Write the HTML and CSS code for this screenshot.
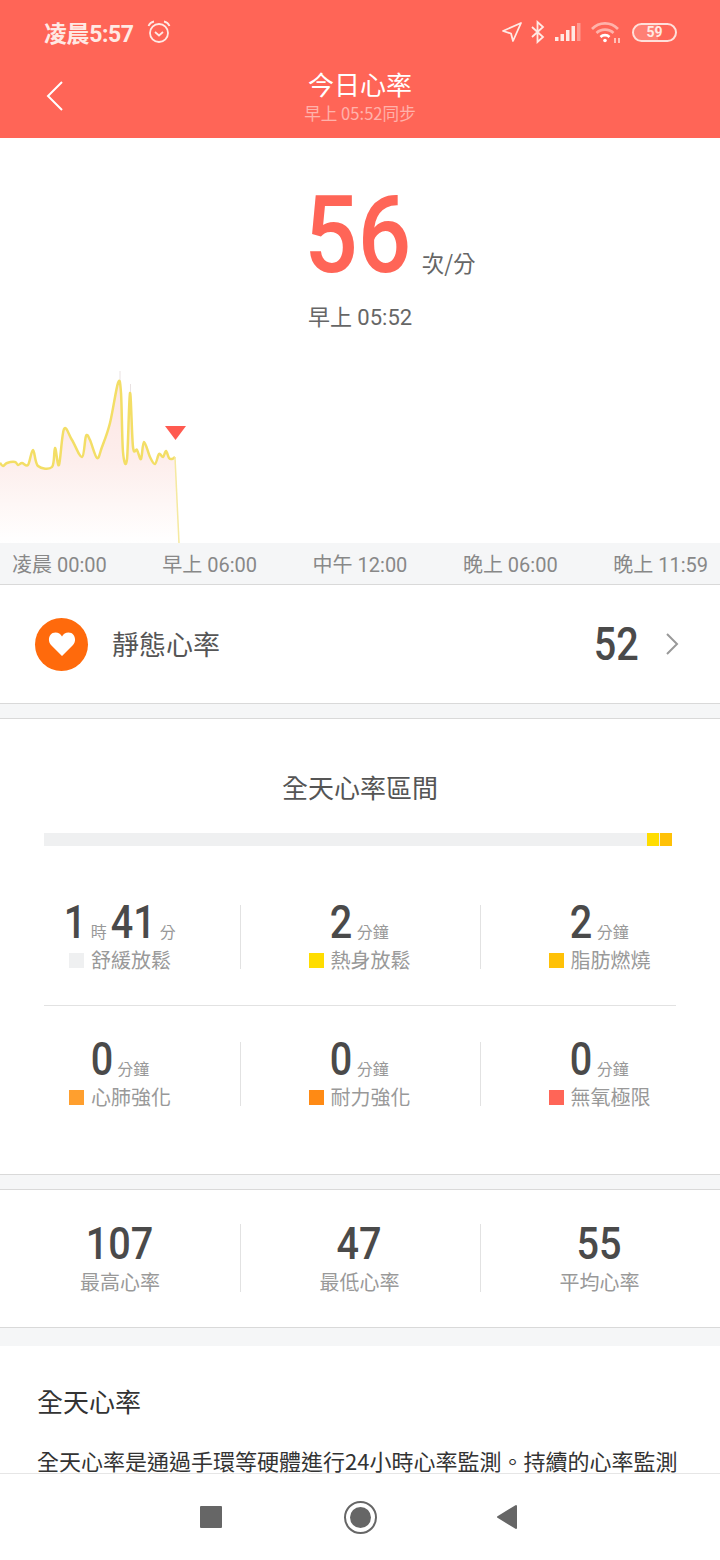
FILE: index.html
```html
<!DOCTYPE html>
<html lang="zh-Hant">
<head>
  <meta charset="UTF-8" />
  <meta name="viewport" content="width=device-width, initial-scale=1.0" />
  <title>今日心率</title>
  <link rel="stylesheet" href="styles.css">
</head>
<body>
  <div class="phone">
    <div class="top">
      <div class="status-bar">
        <div class="status-left">
          <span class="clock">凌晨5:57</span>
          <svg class="alarm" width="24" height="26" viewBox="0 0 24 26" fill="none" stroke="#ffe9e4" stroke-width="1.8">
            <circle cx="12" cy="14" r="9"/>
            <path d="M8 13l4 3.500 4-3.500"/>
            <path d="M1.500 7c1-2.500 3-4 5.500-4.500M22.500 7c-1-2.500-3-4-5.500-4.500"/>
          </svg>
        </div>
        <div class="status-right">
          <svg width="20" height="22" viewBox="0 0 20 22" fill="none" stroke="#ffe9e4" stroke-width="1.8" stroke-linejoin="round">
            <path d="M19 2L1 10l8 2.500L11 20z"/>
          </svg>
          <svg width="16" height="24" viewBox="0 0 16 24" fill="none" stroke="#ffe9e4" stroke-width="1.8">
            <path d="M2 7l11 10-5.500 5V2L13 7 2 17"/>
          </svg>
          <svg width="28" height="20" viewBox="0 0 28 20" fill="#ffe9e4">
            <rect x="1" y="15" width="3.500" height="4"/>
            <rect x="6.500" y="12" width="3.500" height="7"/>
            <rect x="12" y="8" width="3.500" height="11"/>
            <rect x="17.500" y="4" width="3.500" height="15"/>
            <rect x="23" y="1" width="3.500" height="18" opacity="0.4"/>
          </svg>
          <svg width="32" height="24" viewBox="0 0 32 24" fill="none" stroke="#ffb3aa" stroke-width="2.600">
            <path d="M2 9c7-7.500 19-7.500 26 0"/>
            <path d="M6.500 13c4.500-4.500 12.500-4.500 17 0" stroke="#ffb3aa"/>
            <path d="M10.500 17c2.500-2.500 6.500-2.500 9 0" stroke="#fff"/>
            <circle cx="15" cy="20.500" r="1.800" fill="#fff" stroke="none"/>
            <path d="M25 18v5M29 18v5" stroke="#ffe0da" stroke-width="1.500"/>
          </svg>
          <div class="battery"><span class="battery-level"></span><span class="battery-num">59</span></div>
        </div>
      </div>
      <div class="nav">
        <svg class="back" width="18" height="30" viewBox="0 0 18 30" fill="none" stroke="#fff" stroke-width="2">
          <path d="M16 1L2 15l14 14"/>
        </svg>
        <div class="nav-title">今日心率</div>
        <div class="nav-sub">早上 05:52同步</div>
      </div>
    </div>

    <div class="summary">
      <div class="rate"><b class="num rate-num">56</b><span class="rate-unit">次/分</span></div>
      <div class="rate-time">早上 05:52</div>
      <svg class="chart" width="720" height="205" viewBox="0 338 720 205">
        <defs>
          <linearGradient id="fade" x1="0" y1="0" x2="0" y2="1">
            <stop offset="0" stop-color="#fde6e4"/>
            <stop offset="0.5" stop-color="#fdeeec"/>
            <stop offset="1" stop-color="#ffffff"/>
          </linearGradient>
        </defs>
        <path id="chart-fill" fill="url(#fade)"/>
        <path fill="none" stroke="#e9e2e2" stroke-width="1" d="M120 371V384M130.500 384V394"/>
        <path id="chart-line" fill="none" stroke="#f3de66" stroke-width="2.5" stroke-linejoin="round"/>
        <path fill="none" stroke="#f5e9a0" stroke-width="1.500" d="M175 457L179 543"/>
        <path fill="#ff5a50" d="M165 426h21l-10.500 14z"/>
      </svg>
    </div>
    <div class="axis">
      <span>凌晨 00:00</span>
      <span>早上 06:00</span>
      <span>中午 12:00</span>
      <span>晚上 06:00</span>
      <span>晚上 11:59</span>
    </div>

    <div class="resting">
      <div class="heart-badge">
        <svg width="28" height="26" viewBox="0 0 28 26" fill="#fff">
          <path d="M14 25L3 14C-1 9.500 1 1.500 7.500 1.500c3 0 5 1.500 6.500 4 1.500-2.500 3.500-4 6.500-4C27 1.500 29 9.500 25 14z"/>
        </svg>
      </div>
      <div class="resting-label">靜態心率</div>
      <b class="num resting-num">52</b>
      <svg class="chevron" width="14" height="22" viewBox="0 0 14 22" fill="none" stroke="#999" stroke-width="2">
        <path d="M2 1l10 10L2 21"/>
      </svg>
    </div>

    <div class="gap"></div>

    <div class="zones">
      <div class="zones-title">全天心率區間</div>
      <div class="zones-bar"><span class="seg seg-warm"></span><span class="seg seg-burn"></span></div>
      <div class="zones-grid">
        <div class="zone">
          <div class="zone-value"><b class="num one">1</b><small>時</small><b class="num">41</b><small>分</small></div>
          <div class="zone-name"><i class="dot c-relax"></i>舒緩放鬆</div>
        </div>
        <div class="zone">
          <div class="zone-value"><b class="num one">2</b><small>分鐘</small></div>
          <div class="zone-name"><i class="dot c-warm"></i>熱身放鬆</div>
        </div>
        <div class="zone">
          <div class="zone-value"><b class="num one">2</b><small>分鐘</small></div>
          <div class="zone-name"><i class="dot c-burn"></i>脂肪燃燒</div>
        </div>
      </div>
      <div class="zones-rule"></div>
      <div class="zones-grid">
        <div class="zone">
          <div class="zone-value"><b class="num one">0</b><small>分鐘</small></div>
          <div class="zone-name"><i class="dot c-cardio"></i>心肺強化</div>
        </div>
        <div class="zone">
          <div class="zone-value"><b class="num one">0</b><small>分鐘</small></div>
          <div class="zone-name"><i class="dot c-endure"></i>耐力強化</div>
        </div>
        <div class="zone">
          <div class="zone-value"><b class="num one">0</b><small>分鐘</small></div>
          <div class="zone-name"><i class="dot c-max"></i>無氧極限</div>
        </div>
      </div>
    </div>

    <div class="gap"></div>

    <div class="stats">
      <div class="stat"><b class="num three">107</b><span>最高心率</span></div>
      <div class="stat"><b class="num">47</b><span>最低心率</span></div>
      <div class="stat"><b class="num">55</b><span>平均心率</span></div>
    </div>

    <div class="gap-plain"></div>

    <div class="about">
      <h3>全天心率</h3>
      <p>全天心率是通過手環等硬體進行24小時心率監測。持續的心率監測</p>
    </div>

    <div class="navbar">
      <span class="nav-square"></span>
      <span class="nav-home"><span></span></span>
      <svg class="nav-back" width="22" height="26" viewBox="0 0 22 26" fill="#666" stroke="#666" stroke-width="2" stroke-linejoin="round">
        <path d="M20 2v22L2 13z"/>
      </svg>
    </div>
  </div>

  <script>
    const points = [
      [0,463],[3,466],[7,463],[15,462],[18,465],[22,463],[28,465],[33,450],[38,466],[52,467],
      [55,448],[59,465],[64,429],[72,440],[82,457],[86,436],[90,440],[97,458],[102,447],[110,423],
      [118,383],[121,393],[123,452],[127,459],[130,393],[133,447],[137,450],[141,459],[144,442],
      [150,457],[155,464],[159,454],[163,457],[166,451],[169,458],[172,459],[175,457]
    ];

    function smoothPath(pts) {
      let d = "M" + pts[0][0] + " " + pts[0][1];
      for (let i = 0; i < pts.length - 1; i++) {
        const p0 = pts[Math.max(i - 1, 0)];
        const p1 = pts[i];
        const p2 = pts[i + 1];
        const p3 = pts[Math.min(i + 2, pts.length - 1)];
        const c1x = p1[0] + (p2[0] - p0[0]) / 6;
        const c1y = p1[1] + (p2[1] - p0[1]) / 6;
        const c2x = p2[0] - (p3[0] - p1[0]) / 6;
        const c2y = p2[1] - (p3[1] - p1[1]) / 6;
        d += "C" + c1x + " " + c1y + " " + c2x + " " + c2y + " " + p2[0] + " " + p2[1];
      }
      return d;
    }

    const line = smoothPath(points);
    document.getElementById("chart-line").setAttribute("d", line);
    document.getElementById("chart-fill").setAttribute("d", line + "L179 543L0 543z");
  </script>
</body>
</html>
```

FILE: styles.css
```css
* {
  box-sizing: border-box;
}

body {
  margin: 0;
  padding: 0;
  background: white;
  font-family: "Noto Sans CJK TC", "Noto Sans", sans-serif;
  color: #333;
}

.phone {
  width: 720px;
  height: 1560px;
  display: flex;
  flex-direction: column;
  overflow: hidden;
}

/* digits in the app are a narrow DIN, squeeze Roboto to get close */
.num {
  display: inline-block;
  font-family: "Roboto", sans-serif;
  font-weight: 500;
  color: #4a4a4a;
  transform: scaleX(0.86);
  margin: 0 -0.08em;
}

.num.one {
  margin: 0 -0.04em;
}

.top {
  height: 138px;
  flex: none;
  background: #ff6557;
  color: white;
}

.status-bar {
  height: 64px;
  padding: 0 43px 0 44px;
  display: flex;
  justify-content: space-between;
  align-items: center;
}

.status-left,
.status-right {
  display: flex;
  align-items: center;
}

.clock {
  font-family: "Roboto", "Noto Sans CJK TC", sans-serif;
  font-size: 23px;
  font-weight: 700;
  color: #ffe9e4;
  letter-spacing: -0.4px;
}

.alarm {
  margin-left: 13px;
}

.status-right {
  gap: 8px;
}

.battery {
  position: relative;
  width: 45px;
  height: 19px;
  margin-left: 2px;
  border: 2px solid #ffe0da;
  border-radius: 10px;
  overflow: hidden;
  text-align: center;
}

.battery-level {
  position: absolute;
  left: 0;
  top: 0;
  bottom: 0;
  width: 59%;
  background: rgba(255, 255, 255, 0.18);
}

.battery-num {
  position: relative;
  display: block;
  font-family: "Roboto", sans-serif;
  font-size: 14px;
  font-weight: 700;
  line-height: 15px;
  color: #ffe9e4;
}

.nav {
  position: relative;
  height: 74px;
  padding-top: 2px;
  text-align: center;
}

.back {
  position: absolute;
  left: 46px;
  top: 17px;
}

.nav-title {
  font-size: 26px;
  line-height: 36px;
}

.nav-sub {
  margin-top: 1px;
  font-size: 16.6px;
  line-height: 20px;
  color: rgba(255, 255, 255, 0.5);
}

.summary {
  position: relative;
  height: 405px;
  flex: none;
  text-align: center;
}

.rate {
  height: 150px;
  padding: 46px 0 0 304px;
  display: flex;
  align-items: baseline;
  white-space: nowrap;
}

.rate-num {
  font-size: 107px;
  line-height: 104px;
  color: #ff6557;
  transform: scaleX(0.88);
  margin: 0 -0.065em;
}

.rate-unit {
  margin-left: 10px;
  font-size: 22.5px;
  color: #666;
}

.rate-time {
  margin-top: 14px;
  font-family: "Roboto", "Noto Sans CJK TC", sans-serif;
  font-size: 22px;
  line-height: 32px;
  color: #666;
}

.chart {
  position: absolute;
  left: 0;
  bottom: 0;
}

.axis {
  height: 42px;
  flex: none;
  padding: 0 12px;
  display: flex;
  justify-content: space-between;
  align-items: center;
  background: #f5f6f7;
  border-bottom: 1px solid #d9d9d9;
  font-family: "Roboto", "Noto Sans CJK TC", sans-serif;
  font-size: 20px;
  color: #888;
}

.resting {
  height: 118px;
  flex: none;
  padding: 0 41px 0 35px;
  display: flex;
  align-items: center;
}

.heart-badge {
  width: 53px;
  height: 53px;
  border-radius: 50%;
  background: #ff6a0c;
  display: flex;
  justify-content: center;
  align-items: center;
}

.resting-label {
  flex: 1;
  margin-left: 24px;
  margin-bottom: 2px;
  font-size: 27px;
  color: #555;
}

.resting-num {
  margin-right: 23px;
  font-size: 46px;
  line-height: 54px;
}

.gap {
  height: 16px;
  flex: none;
  background: #f5f6f7;
  border-top: 1px solid #d9d9d9;
  border-bottom: 1px solid #d9d9d9;
}

.zones {
  height: 455px;
  flex: none;
  padding-top: 49px;
}

.zones-title {
  font-size: 26px;
  line-height: 38px;
  text-align: center;
  color: #555;
}

.zones-bar {
  height: 13px;
  margin: 27px 48px 0 44px;
  display: flex;
  justify-content: flex-end;
  gap: 1px;
  background: #eff0f1;
}

.seg {
  width: 12px;
}

.seg-warm {
  background: #ffdd00;
}

.seg-burn {
  background: #ffc107;
}

.zones-grid {
  display: grid;
  grid-template-columns: repeat(3, 1fr);
  margin-top: 36px;
}

.zones-bar + .zones-grid {
  margin-top: 59px;
}

.zone {
  height: 64px;
  text-align: center;
}

.zone + .zone {
  padding-right: 2px;
  border-left: 1px solid #e2e2e2;
}

.zone-value {
  height: 35px;
  padding-left: 4px;
  line-height: 35px;
  white-space: nowrap;
}

.zone-value .num {
  font-size: 46px;
}

.zone-value small {
  margin: 0 4px;
  font-size: 16px;
  color: #999;
}

.zone-name {
  margin-top: 7px;
  display: flex;
  justify-content: center;
  align-items: center;
  gap: 7px;
  font-size: 20px;
  line-height: 26px;
  color: #999;
}

.dot {
  width: 15px;
  height: 15px;
}

.c-relax {
  background: #eff0f1;
}

.c-warm {
  background: #ffdd00;
}

.c-burn {
  background: #ffc107;
}

.c-cardio {
  background: #ff9f2e;
}

.c-endure {
  background: #ff8a14;
}

.c-max {
  background: #ff6557;
}

.zones-rule {
  height: 1px;
  margin: 36px 44px 0;
  background: #e2e2e2;
}

.stats {
  height: 138px;
  flex: none;
  padding-top: 34px;
  display: grid;
  grid-template-columns: repeat(3, 1fr);
  border-bottom: 1px solid #d9d9d9;
}

.stat {
  height: 68px;
  display: flex;
  flex-direction: column;
  align-items: center;
}

.stat + .stat {
  padding-right: 2px;
  border-left: 1px solid #e2e2e2;
}

.stat .num {
  font-size: 44px;
  line-height: 40px;
  transform: scaleX(0.9);
  margin: 0 -0.06em;
}

.stat span {
  margin-top: 6px;
  font-size: 20px;
  line-height: 24px;
  color: #999;
}

.gap-plain {
  height: 18px;
  flex: none;
  background: #f5f6f7;
}

.about {
  flex: 1;
  min-height: 0;
  padding: 36px 37px 0;
}

.about h3 {
  margin: 0;
  font-size: 26px;
  font-weight: 400;
  line-height: 38px;
  color: #333;
}

.about p {
  margin: 28px 0 0;
  font-size: 22px;
  line-height: 24px;
  white-space: nowrap;
  color: #333;
}

.navbar {
  height: 87px;
  flex: none;
  padding-left: 200px;
  display: flex;
  align-items: center;
  background: white;
  border-top: 1px solid #e6e6e6;
}

.nav-square {
  width: 22px;
  height: 22px;
  margin-right: 122px;
  background: #666;
  border-radius: 1px;
}

.nav-home {
  width: 33px;
  height: 33px;
  padding: 4px;
  border: 2px solid #666;
  border-radius: 50%;
}

.nav-home span {
  display: block;
  width: 21px;
  height: 21px;
  border-radius: 50%;
  background: #666;
}

.nav-back {
  margin-left: 119px;
}
```
